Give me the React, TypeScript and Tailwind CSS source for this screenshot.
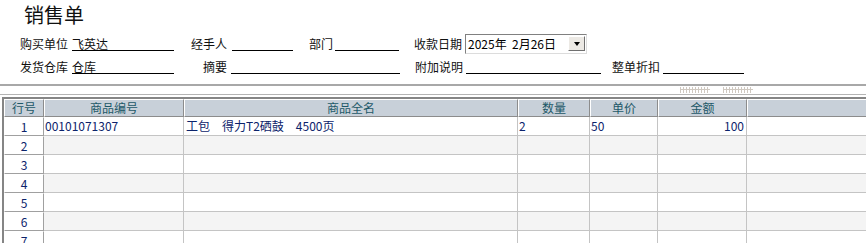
const cols = [
  { key: "no", title: "行号", w: "w-[40px]" },
  { key: "code", title: "商品编号", w: "w-[140px]" },
  { key: "name", title: "商品全名", w: "w-[334px]" },
  { key: "qty", title: "数量", w: "w-[72px]" },
  { key: "price", title: "单价", w: "w-[68px]" },
  { key: "amount", title: "金额", w: "w-[89px]" },
];

const rows = [
  { code: "00101071307", name: "工包　得力T2硒鼓　4500页", qty: "2", price: "50", amount: "100" },
  { code: "", name: "", qty: "", price: "", amount: "" },
  { code: "", name: "", qty: "", price: "", amount: "" },
  { code: "", name: "", qty: "", price: "", amount: "" },
  { code: "", name: "", qty: "", price: "", amount: "" },
  { code: "", name: "", qty: "", price: "", amount: "" },
  { code: "", name: "", qty: "", price: "", amount: "" },
];

function Label({ w, ml, children }: { w: string; ml?: string; children: React.ReactNode }) {
  return <span className={`${w} ${ml ?? ""} shrink-0 whitespace-nowrap`}>{children}</span>;
}

function Field({ w, children }: { w: string; children?: React.ReactNode }) {
  return (
    <span className={`${w} shrink-0 h-[14px] leading-[13px] border-b border-black inline-block whitespace-nowrap`}>
      {children}
    </span>
  );
}

function Grip() {
  return (
    <svg width="30" height="6" className="block">
      {Array.from({ length: 10 }).map((_, i) => (
        <g key={i} stroke="#cfc8c0" strokeWidth="1">
          <line x1={i * 3 + 0.5} y1="0" x2={i * 3 + 0.5} y2="6" />
          <line x1={i * 3} y1="2.5" x2={i * 3 + 3} y2="2.5" />
        </g>
      ))}
    </svg>
  );
}

export default function App() {
  return (
    <div className="w-[866px] h-[243px] overflow-hidden bg-white text-[#111] font-['Noto_Sans_CJK_SC','Noto_Sans',sans-serif]">
      {/* 标题 */}
      <div className="h-[32px] pl-[24px] pt-[1px] text-[20px] leading-[28px]">销售单</div>

      {/* 表头信息 */}
      <div className="text-[12px]">
        <div className="h-[23px] flex items-center pl-[20px]">
          <Label w="w-[52px]">购买单位</Label>
          <Field w="w-[102px]">飞英达</Field>
          <Label w="w-[41px]" ml="ml-[17px]">经手人</Label>
          <Field w="w-[61px]" />
          <Label w="w-[26px]" ml="ml-[16px]">部门</Label>
          <Field w="w-[64px]" />
          <Label w="w-[51px]" ml="ml-[15px]">收款日期</Label>
          <div className="w-[122px] shrink-0 h-[20px] flex items-center border border-t-[#808080] border-l-[#808080] border-r-[#dcdcdc] border-b-[#dcdcdc] text-black pl-[2px] pr-[1px]">
            <span className="flex-1 whitespace-pre leading-[16px]">2025年  2月26日</span>
            <span className="w-[17px] h-[15px] flex items-center justify-center bg-[#ece9e4] border border-t-white border-l-white border-r-[#707070] border-b-[#707070]">
              <span className="w-0 h-0 border-l-[3.5px] border-r-[3.5px] border-t-[4px] border-l-transparent border-r-transparent border-t-black" />
            </span>
          </div>
        </div>
        <div className="h-[23px] flex items-center pl-[20px]">
          <Label w="w-[52px]">发货仓库</Label>
          <Field w="w-[102px]">仓库</Field>
          <Label w="w-[28px]" ml="ml-[29px]">摘要</Label>
          <Field w="w-[169px]" />
          <Label w="w-[51px]" ml="ml-[15px]">附加说明</Label>
          <Field w="w-[135px]" />
          <Label w="w-[51px]" ml="ml-[11px]">整单折扣</Label>
          <Field w="w-[81px]" />
        </div>
      </div>

      {/* 分隔线 */}
      <div className="mt-[6px] h-[2px] bg-[#a8a8a8]" />
      <div className="h-[8px] flex items-center gap-[13px] pl-[680px]">
        <Grip />
        <Grip />
      </div>
      <div className="h-[1px] bg-[#b4b4b4]" />
      <div className="h-[2px]" />

      {/* 表格 */}
      <div className="ml-[2px] border-t-2 border-l-2 border-[#858585] text-[12px]">
        <div className="flex h-[18px]">
          {cols.map((c) => (
            <div
              key={c.key}
              className={`${c.w} shrink-0 flex items-center justify-center bg-[#c8d0d9] text-[#1d5868] border-t border-l border-t-white border-l-white border-r border-b border-r-[#8c8c8c] border-b-[#8c8c8c] leading-none`}
            >
              {c.title}
            </div>
          ))}
          <div className="flex-1 bg-[#c8d0d9] border-t border-l border-t-white border-l-white border-b border-b-[#8c8c8c]" />
        </div>
        {rows.map((r, i) => (
          <div key={i} className={`flex h-[19px] text-[#0c236b] ${i % 2 === 1 ? "bg-[#f4f4f4]" : "bg-white"}`}>
            <div className="w-[40px] shrink-0 flex items-center justify-center bg-white border-t border-l border-t-white border-l-white border-r border-b border-r-[#a0a0a0] border-b-[#a0a0a0]">
              {i + 1}
            </div>
            <div className="w-[140px] shrink-0 flex items-center pl-[1px] border-r border-b border-[#c4c4c4]">{r.code}</div>
            <div className="w-[334px] shrink-0 flex items-center pl-[2px] border-r border-b border-[#c4c4c4] whitespace-pre">{r.name}</div>
            <div className="w-[72px] shrink-0 flex items-center pl-[1px] border-r border-b border-[#c4c4c4]">{r.qty}</div>
            <div className="w-[68px] shrink-0 flex items-center pl-[1px] border-r border-b border-[#c4c4c4]">{r.price}</div>
            <div className="w-[89px] shrink-0 flex items-center justify-end pr-[2px] border-r border-b border-[#c4c4c4]">{r.amount}</div>
            <div className="flex-1 border-b border-[#c4c4c4]" />
          </div>
        ))}
      </div>
    </div>
  );
}
